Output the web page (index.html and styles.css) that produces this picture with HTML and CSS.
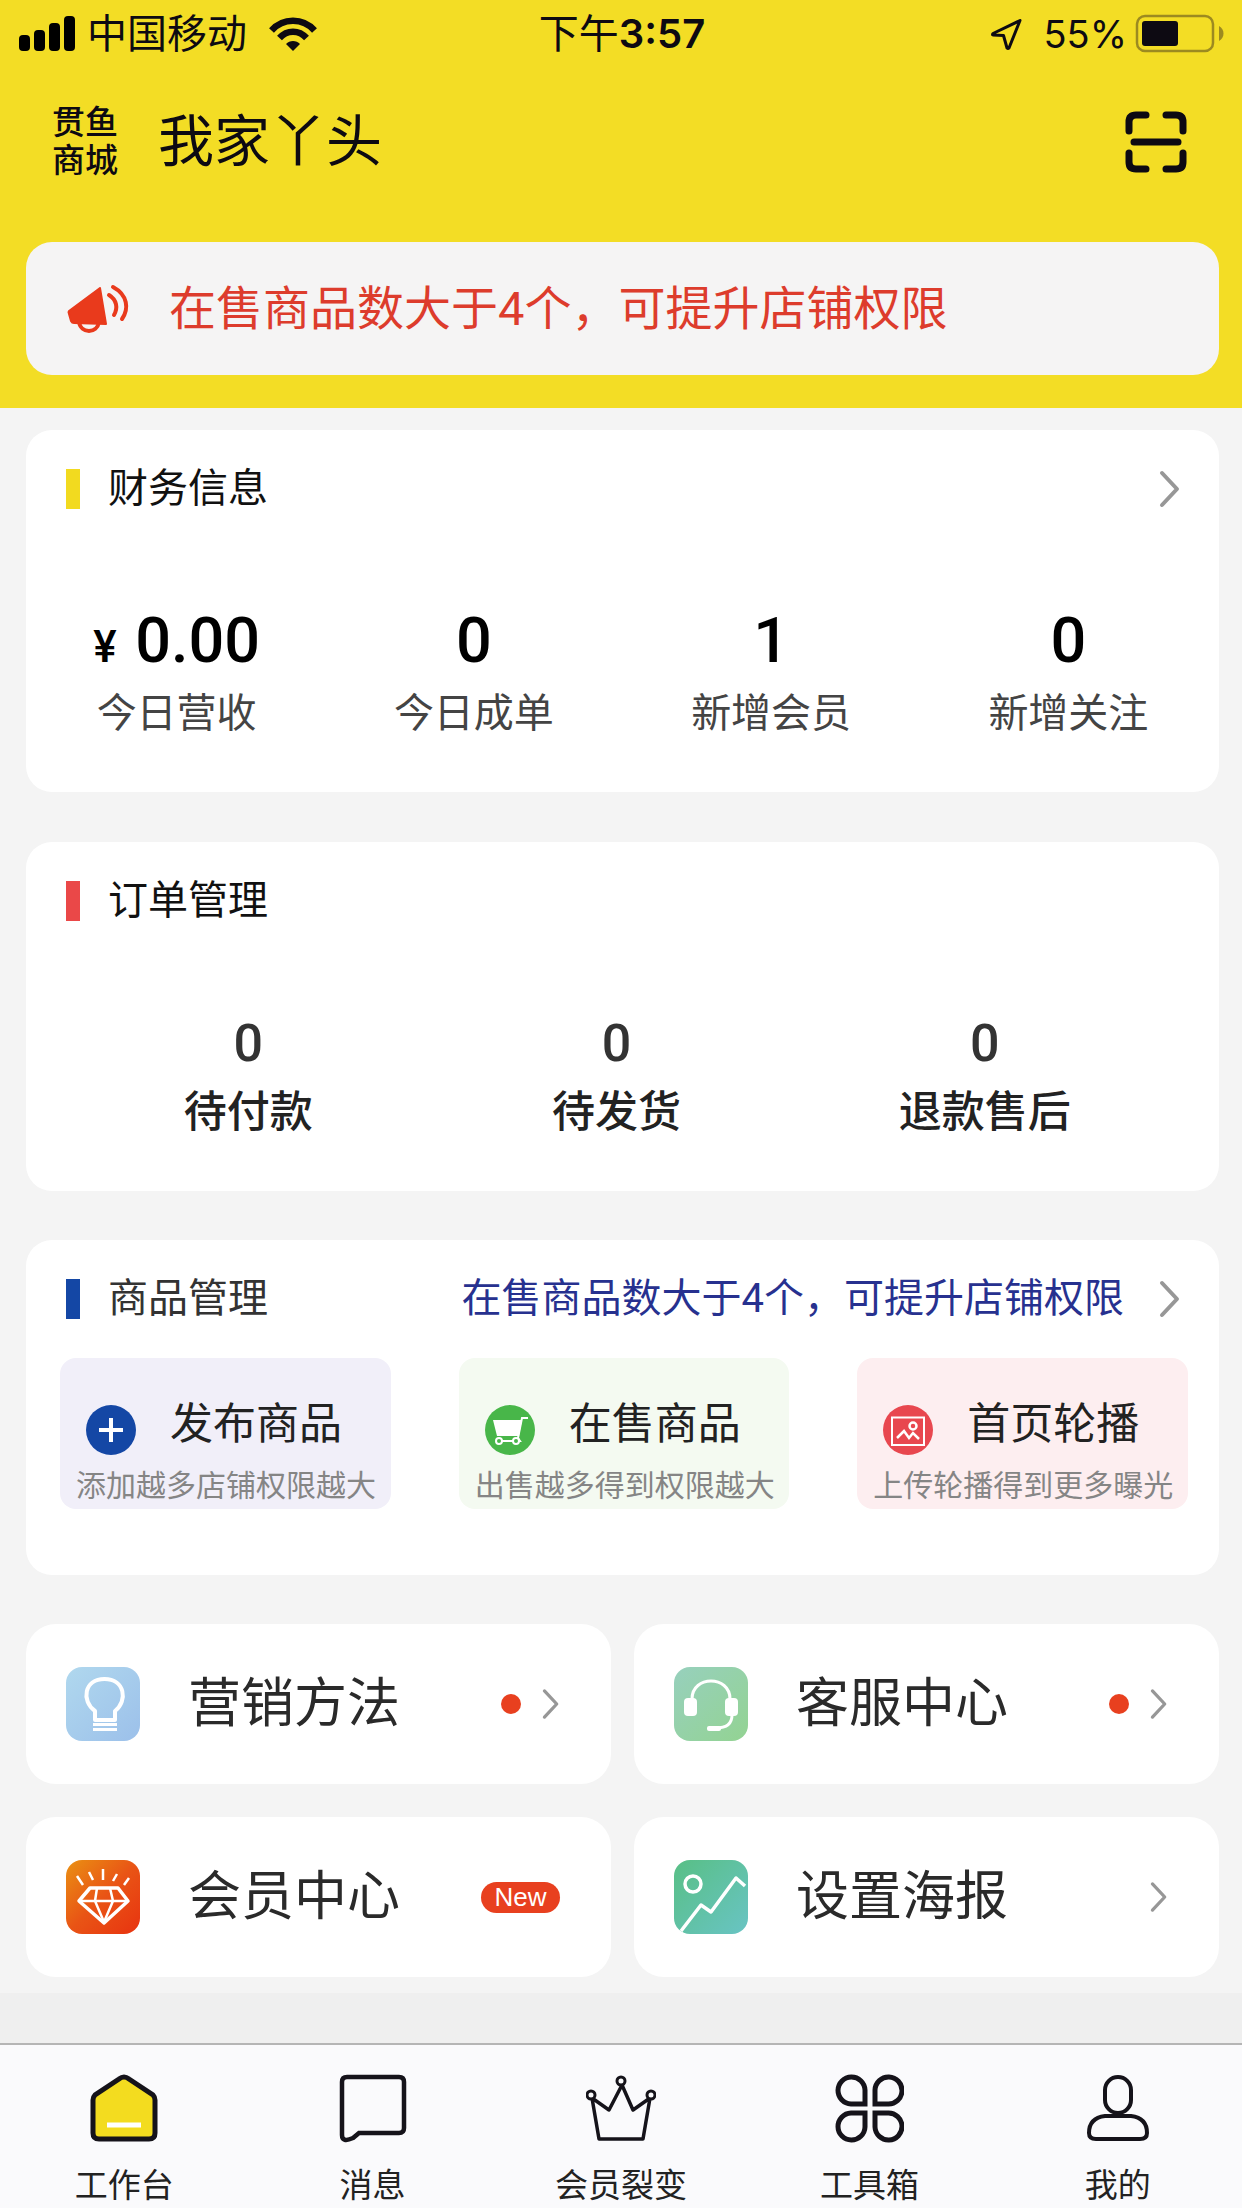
FILE: index.html
```html
<!DOCTYPE html>
<html lang="zh-CN">
<head>
<meta charset="utf-8">
<meta name="viewport" content="width=device-width, initial-scale=1">
<title>贯鱼商城 - 工作台</title>
<link rel="stylesheet" href="styles.css">
</head>
<body>
<svg class="defs" width="0" height="0" aria-hidden="true">
  <symbol id="chevron" viewBox="0 0 22 38"><path d="M3 3 18 19 3 35" fill="none" stroke="currentColor" stroke-width="4" stroke-linecap="round" stroke-linejoin="round"/></symbol>
</svg>

<header class="top">
  <div class="status">
    <div class="status-side">
      <svg class="signal" width="56" height="36" viewBox="0 0 56 36" aria-hidden="true">
        <rect x="0" y="19" width="11" height="16" rx="4"/><rect x="15" y="14" width="11" height="21" rx="4"/><rect x="30" y="7" width="11" height="28" rx="4"/><rect x="45" y="0" width="11" height="35" rx="4"/>
      </svg>
      <span class="carrier">中国移动</span>
      <svg class="wifi" width="48" height="34" viewBox="0 0 48 34" aria-hidden="true">
        <g fill="none" stroke="#0d0a12" stroke-width="6.500"><path d="M2.500 13.500C14 .500 34 .500 45.500 13.500"/><path d="M10.500 21C18 12.500 30 12.500 37.500 21"/></g>
        <path d="M24 34 17 27C20.500 23 27.500 23 31 27Z" fill="#0d0a12"/>
      </svg>
    </div>
    <div class="clock">下午<b>3:57</b></div>
    <div class="status-side status-right">
      <svg width="34" height="34" viewBox="0 0 34 34" aria-hidden="true"><path d="M31 3.500 4 16.500Q3 17.500 4 18L14.500 18.500 18 31Q19 32 20 31Z" fill="none" stroke="#0d0a12" stroke-width="3" stroke-linejoin="round"/></svg>
      <span class="percent">55%</span>
      <svg width="90" height="40" viewBox="0 0 90 40" aria-hidden="true">
        <rect x="2" y="2" width="76" height="35" rx="8" fill="none" stroke="#9c8a20" stroke-width="2.500"/>
        <rect x="7" y="7" width="36" height="25" rx="3" fill="#0d0a12"/><path d="M84 12c6 3 6 12 0 15Z" fill="#9c8a20"/>
      </svg>
    </div>
  </div>

  <div class="shop">
    <div class="brand">贯鱼<br>商城</div>
    <h1 class="shop-name">我家丫头</h1>
    <button class="scan" type="button" aria-label="扫一扫">
      <svg width="62" height="62" viewBox="0 0 62 62" fill="none" stroke="#0d0a12" stroke-width="7" stroke-linecap="round"><path d="M4 20V11Q4 4 11 4H21M41 4H51Q58 4 58 11V20M58 42V51Q58 58 51 58H41M21 58H11Q4 58 4 51V42M9 31H53"/></svg>
    </button>
  </div>

  <p class="notice">
    <svg width="64" height="50" viewBox="0 0 64 50" aria-hidden="true">
      <path d="M34 4 3 27Q2 28 3 30L5 37Q6 39 8 39L40 40Z" fill="#e93a1c" stroke="#e93a1c" stroke-width="2" stroke-linejoin="round"/>
      <path d="M13 38C15 50 31 50 33 38" fill="none" stroke="#e93a1c" stroke-width="4"/>
      <path d="M43 11C51 16 52 24 48 31M47 3C62 11 63 25 56 35" fill="none" stroke="#e93a1c" stroke-width="4" stroke-linecap="round"/>
    </svg>
    <span>在售商品数大于4个，可提升店铺权限</span>
  </p>
</header>

<main class="content">
  <section class="card finance">
    <a class="card-head" href="#finance">
      <h2 class="card-title mark-yellow">财务信息</h2>
      <svg class="chevron" width="22" height="38"><use href="#chevron"/></svg>
    </a>
    <dl class="stats">
      <div class="stat"><dt>今日营收</dt><dd><small>¥</small> 0.00</dd></div>
      <div class="stat"><dt>今日成单</dt><dd>0</dd></div>
      <div class="stat"><dt>新增会员</dt><dd>1</dd></div>
      <div class="stat"><dt>新增关注</dt><dd>0</dd></div>
    </dl>
  </section>

  <section class="card orders">
    <div class="card-head"><h2 class="card-title mark-red">订单管理</h2></div>
    <dl class="stats">
      <div class="stat"><dt>待付款</dt><dd>0</dd></div>
      <div class="stat"><dt>待发货</dt><dd>0</dd></div>
      <div class="stat"><dt>退款售后</dt><dd>0</dd></div>
    </dl>
  </section>

  <section class="card goods">
    <a class="card-head" href="#goods">
      <h2 class="card-title mark-blue">商品管理</h2>
      <span class="card-tip">在售商品数大于4个，可提升店铺权限</span>
      <svg class="chevron" width="22" height="38"><use href="#chevron"/></svg>
    </a>
    <div class="actions">
      <a class="action violet" href="#publish">
        <svg width="50" height="50" viewBox="0 0 50 50"><circle cx="25" cy="25" r="25" fill="#1447a5"/><path d="M25 13V37M13 25H37" stroke="#fff" stroke-width="4"/></svg>
        <strong>发布商品</strong>
        <span>添加越多店铺权限越大</span>
      </a>
      <a class="action green" href="#selling">
        <svg width="50" height="50" viewBox="0 0 50 50"><circle cx="25" cy="25" r="25" fill="#48b649"/><path d="M8 15 12 31H34L37 15Z" fill="#fff"/><path d="M43 13H37L33 33 35 36H13" fill="none" stroke="#fff" stroke-width="2"/><circle cx="14" cy="36" r="3" fill="#48b649" stroke="#fff" stroke-width="2"/><circle cx="31" cy="36" r="3" fill="#48b649" stroke="#fff" stroke-width="2"/></svg>
        <strong>在售商品</strong>
        <span>出售越多得到权限越大</span>
      </a>
      <a class="action pink" href="#carousel">
        <svg width="50" height="50" viewBox="0 0 50 50"><circle cx="25" cy="25" r="25" fill="#e8474f"/><g fill="none" stroke="#fff" stroke-width="2.500"><path d="M9 12.500H41V40H9Z" stroke-width="2"/><circle cx="30" cy="21" r="3.500"/><path d="M14 33 21 26 26 33 30 28 36 34"/></g></svg>
        <strong>首页轮播</strong>
        <span>上传轮播得到更多曝光</span>
      </a>
    </div>
  </section>

  <div class="tiles">
    <a class="tile" href="#marketing">
      <svg width="74" height="74" viewBox="0 0 74 74">
        <defs><linearGradient id="g1" x1="0" y1="0" x2="1" y2="1"><stop offset="0" stop-color="#b0d8ee"/><stop offset="1" stop-color="#9cc0ea"/></linearGradient></defs>
        <rect width="74" height="74" rx="16" fill="url(#g1)"/>
        <path d="M29 53V44C15 34 18 12 38.500 12S62 34 49 44V53Z" fill="none" stroke="#fff" stroke-width="4" stroke-linejoin="round"/><path d="M27 57.500H51M27 62.500H51" stroke="#fff" stroke-width="3"/>
      </svg>
      <span class="tile-name">营销方法</span>
      <i class="dot"></i>
      <svg class="chevron" width="18" height="32"><use href="#chevron"/></svg>
    </a>
    <a class="tile" href="#service">
      <svg width="74" height="74" viewBox="0 0 74 74">
        <defs><linearGradient id="g2" x1="0" y1="0" x2="1" y2="1"><stop offset="0" stop-color="#97d0bd"/><stop offset="1" stop-color="#93d392"/></linearGradient></defs>
        <rect width="74" height="74" rx="16" fill="url(#g2)"/>
        <path d="M18 32C18 8 56 8 56 32M58 48Q58 61 42 61" fill="none" stroke="#fff" stroke-width="3"/><rect x="10" y="31" width="13" height="18" rx="4" fill="#fff"/><rect x="51" y="31" width="13" height="18" rx="4" fill="#fff"/><rect x="33" y="59" width="14" height="5" rx="2" fill="#fff"/>
      </svg>
      <span class="tile-name">客服中心</span>
      <i class="dot"></i>
      <svg class="chevron" width="18" height="32"><use href="#chevron"/></svg>
    </a>
    <a class="tile" href="#member">
      <svg width="74" height="74" viewBox="0 0 74 74">
        <defs><linearGradient id="g3" x1="0" y1="0" x2="1" y2="1"><stop offset="0" stop-color="#ea9113"/><stop offset=".5" stop-color="#e95415"/><stop offset="1" stop-color="#e83310"/></linearGradient></defs>
        <rect width="74" height="74" rx="16" fill="url(#g3)"/>
        <g fill="none" stroke="#fff" stroke-width="3.500" stroke-linejoin="round"><path d="M24 28H52L62 41 38 63 13 41Z"/><path d="M14 41H61M31 28 29 41 38 62 47 41 44 28" stroke-width="2.500"/><path d="M11 16 17 25M23 12 27 20M37 9V20M51 14 47 21M63 18 58 25" stroke-width="2.500"/></g>
      </svg>
      <span class="tile-name">会员中心</span>
      <em class="new">New</em>
    </a>
    <a class="tile" href="#poster">
      <svg width="74" height="74" viewBox="0 0 74 74">
        <defs><linearGradient id="g4" x1="0" y1="0" x2="1" y2="1"><stop offset="0" stop-color="#58bf85"/><stop offset="1" stop-color="#69c4c4"/></linearGradient></defs>
        <rect width="74" height="74" rx="16" fill="url(#g4)"/>
        <g fill="none" stroke="#fff" stroke-width="3.500" stroke-linejoin="round"><circle cx="19" cy="24" r="8"/><path d="M7 71 27 45 37 52 62 18 71 26"/></g>
      </svg>
      <span class="tile-name">设置海报</span>
      <svg class="chevron" width="18" height="32"><use href="#chevron"/></svg>
    </a>
  </div>
</main>

<nav class="tabs">
  <a class="tab" href="#home" aria-current="page">
    <svg width="70" height="70" viewBox="0 0 70 70"><path d="M30 6Q35 2 40 6L64 22Q66 24 66 27V60Q66 66 60 66H10Q4 66 4 60V27Q4 24 6 22Z" fill="#f3dc1f" stroke="#15131a" stroke-width="5"/><path d="M18 52H52" stroke="#fff" stroke-width="5"/></svg>
    工作台</a>
  <a class="tab" href="#messages">
    <svg width="70" height="70" viewBox="0 0 70 70"><path d="M9 4H61Q66 4 66 9V55Q66 60 61 60H21L15 65Q4 70 4 62V9Q4 4 9 4Z" fill="none" stroke="#15131a" stroke-width="4.500"/></svg>
    消息</a>
  <a class="tab" href="#fission">
    <svg width="70" height="70" viewBox="0 0 70 70" fill="none" stroke="#15131a" stroke-width="3.500" stroke-linejoin="round"><path d="M6 25 13 66H57L64 25 47 37 36 12 23 37Z"/><g fill="#fafafc" stroke-width="3"><circle cx="5" cy="22" r="4"/><circle cx="35" cy="8" r="4"/><circle cx="65" cy="22" r="4"/></g></svg>
    会员裂变</a>
  <a class="tab" href="#tools">
    <svg width="70" height="70" viewBox="0 0 70 70" fill="none" stroke="#15131a" stroke-width="5"><path d="M31 31H17A13.500 13.500 0 1 1 31 17Z"/><path d="M41 31V17A13.500 13.500 0 1 1 54 31Z"/><path d="M31 40V54A13.500 13.500 0 1 1 17 40Z"/><path d="M41 40H54A13.500 13.500 0 1 1 41 54Z"/></svg>
    工具箱</a>
  <a class="tab" href="#me">
    <svg width="70" height="70" viewBox="0 0 70 70" fill="none" stroke="#15131a" stroke-width="4"><rect x="22" y="4" width="26" height="36" rx="13"/><path d="M22 43H48Q64 45 64 60Q64 66 57 66H13Q6 66 6 60Q6 45 22 43Z"/></svg>
    我的</a>
</nav>
</body>
</html>
```
FILE: styles.css
```css
* { box-sizing: border-box; }

body {
  margin: 0;
  min-height: 100vh;
  display: flex;
  flex-direction: column;
  background: #f4f4f4;
  color: #222;
  font-family: Roboto, "Noto Sans CJK SC", sans-serif;
  font-size: 40px;
  line-height: 1;
}

a { color: inherit; text-decoration: none; }
h1, h2, p, dl, dd { margin: 0; font-weight: 400; }
svg { display: block; flex: none; }
.defs { position: absolute; }

/* Header */
.top {
  padding: 0 23px 33px 26px;
  background: #f3dd25;
  color: #0d0a12;
}

.status {
  display: flex;
  align-items: center;
  height: 68px;
  margin: 0 -10px 0 -7px;
  font-family: Inter, "Noto Sans CJK SC", sans-serif;
}

.status-side {
  flex: 1;
  display: flex;
  align-items: center;
}

.carrier { margin: 0 22px 0 12px; }
.status-right { justify-content: flex-end; padding-right: 4px; }
.percent { margin: 0 8px 0 20px; font-size: 38px; }
.clock b { font-weight: 600; }

.shop {
  display: flex;
  align-items: center;
  height: 146px;
  margin: 0 32px 28px 26px;
  padding-top: 2px;
}

.brand { font-size: 33px; line-height: 38px; font-weight: 500; }
.shop-name { flex: 1; margin-left: 40px; font-size: 56px; }

.scan { padding: 0; border: 0; background: none; }

.notice {
  display: flex;
  align-items: center;
  gap: 39px;
  min-height: 133px;
  padding: 0 42px 0 40px;
  border-radius: 26px;
  background: #f5f4f4;
  color: #dd3c2c;
  font-size: 47px;
}

/* Cards */
.content {
  flex: 1;
  padding: 22px 23px 66px 26px;
  background: linear-gradient(#f4f4f4, #f4f4f4) top / 100% calc(100% - 50px) no-repeat #efefef;
}

.card {
  border-radius: 26px;
  background: #fff;
}

.card-head {
  display: flex;
  align-items: center;
  height: 118px;
  padding: 0 38px 0 40px;
}

.card-title {
  flex: 1;
  display: flex;
  align-items: center;
  gap: 28px;
  color: #111;
  font-size: 40px;
}

.card-title::before {
  content: "";
  width: 14px;
  height: 40px;
}

.mark-yellow::before { background: #f2da1f; }
.mark-red::before { background: #ea4848; }
.mark-blue::before { background: #1447a5; }
.card-tip { margin-right: 35px; color: #27318f; }
.chevron { color: #979797; }

.stats { display: flex; }

.stat {
  flex: 1;
  display: flex;
  flex-direction: column-reverse;
  justify-content: flex-end;
  align-items: center;
  text-align: center;
}

.finance { padding-bottom: 50px; }
.finance .stats { padding: 53px 2px 0; }
.finance dt { color: #444; line-height: 56px; }
.finance dd { height: 80px; color: #000; font-size: 63px; font-weight: 500; line-height: 80px; margin-bottom: 5px; }
.finance small { margin-right: 3px; font-size: 44px; line-height: 1; }

.orders { margin-top: 50px; padding-bottom: 49px; }
.orders .stats { padding: 52px 50px 0 38px; }
.orders dt { font-size: 43px; font-weight: 500; line-height: 60px; }
.orders dd { color: #333; font-size: 52px; font-weight: 500; line-height: 64px; margin-bottom: 6px; }

.goods { margin-top: 49px; padding-bottom: 66px; }
.goods .card-title { color: #333; }

.actions {
  display: grid;
  grid-template-columns: repeat(3, 1fr);
  gap: 68px;
  padding: 0 31px 0 34px;
}

.action {
  display: grid;
  grid-template-columns: auto 1fr;
  gap: 9px 34px;
  align-items: center;
  padding: 35px 16px 1px;
  border-radius: 16px;
}

.action svg { margin: 12px 0 0 10px; }
.action strong { font-size: 43px; font-weight: 400; line-height: 60px; }
.action span { grid-column: 1 / -1; color: #858585; font-size: 30px; line-height: 44px; white-space: nowrap; }
.violet { background: #f1eff9; }
.green { background: #f4faf1; }
.pink { background: #fdeef0; }

.tiles {
  display: grid;
  grid-template-columns: 1fr 1fr;
  gap: 33px 23px;
  margin-top: 49px;
}

.tile {
  display: flex;
  align-items: center;
  height: 160px;
  padding: 0 51px 0 40px;
  border-radius: 30px;
  background: #fff;
}

.tile-name { flex: 1; margin-left: 48px; font-size: 53px; color: #2a2a2a; }
.dot { width: 20px; height: 20px; margin-right: 21px; border-radius: 50%; background: #e8401f; }

.new {
  width: 79px;
  border-radius: 16px;
  background: #e8401f;
  color: #fff;
  font: 26px/31px "Liberation Sans", sans-serif;
  text-align: center;
}

/* Tab bar */
.tabs {
  display: flex;
  border-top: 2px solid #b5b5b5;
  background: #fafafc;
}

.tab {
  flex: 1;
  display: flex;
  flex-direction: column;
  align-items: center;
  gap: 21px;
  padding-top: 28px;
  font-size: 33px;
  line-height: 44px;
}
```
